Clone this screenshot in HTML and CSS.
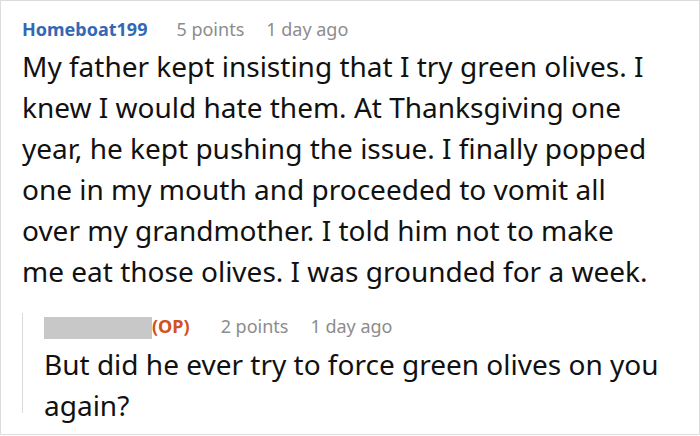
FILE: index.html
```html
<!DOCTYPE html>
<html>
<head>
<meta charset="utf-8">
<link rel="stylesheet" href="styles.css">
</head>
<body>
<div class="frame">
  <div class="comment">
    <div class="meta">
      <span class="author">Homeboat199</span>
      <span class="info">5 points</span>
      <span class="info">1 day ago</span>
    </div>
    <p class="body">My father kept insisting that I try green olives. I knew I would hate them. At Thanksgiving one year, he kept pushing the issue. I finally popped one in my mouth and proceeded to vomit all over my grandmother. I told him not to make me eat those olives. I was grounded for a week.</p>
    <div class="reply">
      <div class="meta">
        <span class="redacted"></span><span class="op">(OP)</span>
        <span class="info">2 points</span>
        <span class="info">1 day ago</span>
      </div>
      <p class="body">But did he ever try to force green olives on you again?</p>
    </div>
  </div>
</div>
</body>
</html>
```

FILE: styles.css
```css
html, body {
  margin: 0;
  padding: 0;
  background: #fff;
}
.frame {
  width: 700px;
  height: 435px;
  box-sizing: border-box;
  border: 1px solid #dcdcdc;
  font-family: "Noto Sans", "Open Sans", sans-serif;
  color: #111;
  overflow: hidden;
}
.comment {
  padding: 15px 0 0 21px;
}
.meta {
  display: flex;
  align-items: center;
  height: 26px;
  font-size: 18px;
  white-space: nowrap;
}
.author {
  color: #3468b4;
  font-weight: 700;
  margin-right: 29px;
}
.info {
  color: #8c8c8c;
  margin-right: 22px;
}
.body {
  margin: 4px 0 0;
  font-size: 28px;
  line-height: 41px;
  width: 632px;
}
.reply {
  margin-top: 33px;
  border-left: 1px solid #dadada;
  padding-left: 21px;
  height: 100px;
}
.reply .meta {
  margin-top: -12px;
  align-items: flex-start;
}
.reply .meta span {
  line-height: 26px;
}
.redacted {
  display: inline-block;
  width: 108px;
  height: 22px;
  margin-top: 4px;
  background: #c8c8c8;
}
.op {
  color: #d0521c;
  font-weight: 700;
  margin-right: 31px;
}
.reply .body {
  width: 640px;
  margin-top: 5px;
}
```
